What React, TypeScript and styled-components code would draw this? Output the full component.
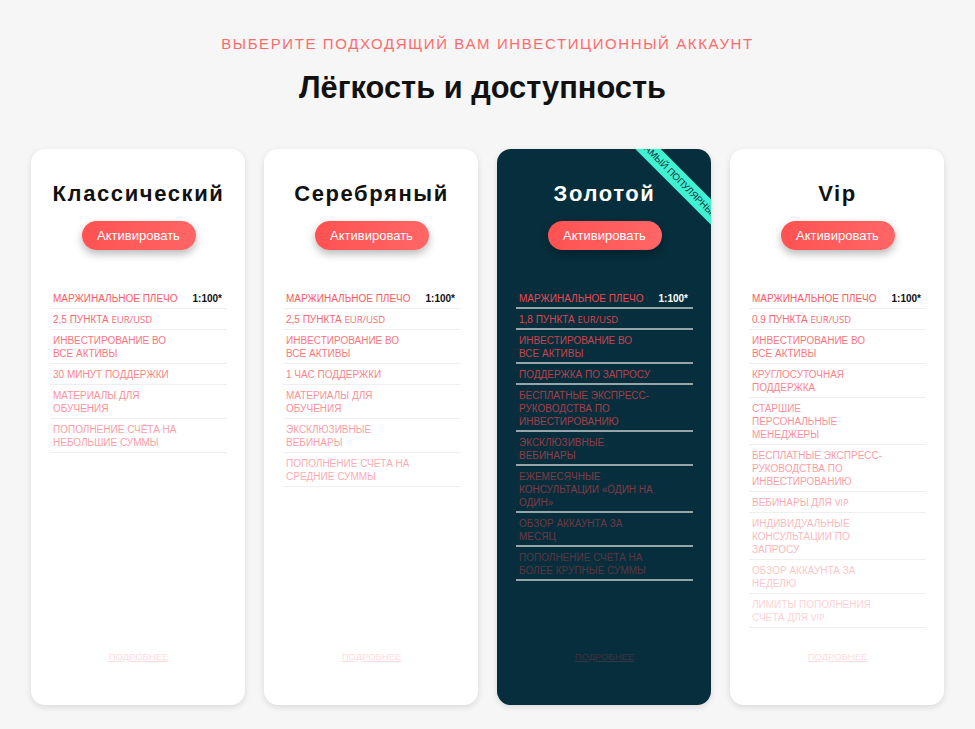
import React from "react";
import styled, { createGlobalStyle } from "styled-components";

const GlobalStyle = createGlobalStyle`
  * { box-sizing: border-box; }
  html, body { margin: 0; padding: 0; background: #f6f6f6; }
  body { font-family: "Liberation Sans", Arial, sans-serif; }
`;

const Page = styled.div`
  width: 975px;
  min-height: 729px;
  padding-top: 35px;
  display: flex;
  flex-direction: column;
  align-items: center;
`;

const Eyebrow = styled.div`
  font-size: 15px;
  letter-spacing: 1.6px;
  color: #ff6b6b;
  line-height: 18px;
  text-transform: uppercase;
`;

const Heading = styled.h1`
  margin: 17px 10px 0 0;
  font-size: 30.8px;
  line-height: 36px;
  font-weight: 700;
  color: #111;
`;

const Grid = styled.div`
  margin-top: 43px;
  display: grid;
  grid-template-columns: repeat(4, 214px);
  gap: 19px;
`;

const Card = styled.div<{ $dark?: boolean }>`
  position: relative;
  overflow: hidden;
  height: 556px;
  border-radius: 14px;
  background: ${(p) => (p.$dark ? "#062e3c" : "#ffffff")};
  box-shadow: 0 2px 6px rgba(0, 0, 0, 0.12);
  padding: 30px 18px 43px 19px;
  display: flex;
  flex-direction: column;
`;

const CardTitle = styled.h2<{ $dark?: boolean }>`
  margin: 0;
  text-align: center;
  font-size: 22px;
  line-height: 30px;
  letter-spacing: 1.6px;
  font-weight: 700;
  color: ${(p) => (p.$dark ? "#ffffff" : "#111111")};
`;

const ActivateButton = styled.button`
  align-self: center;
  margin-top: 12px;
  width: 114px;
  height: 29px;
  border: none;
  border-radius: 15px;
  background: linear-gradient(90deg, #ff5252, #ff6666);
  color: #fff;
  font-family: "Liberation Sans", Arial, sans-serif;
  font-size: 13px;
  box-shadow: 0 4px 8px rgba(0, 0, 0, 0.28);
  cursor: pointer;
`;

const List = styled.ul`
  list-style: none;
  margin: 38px 0 0;
  padding: 0;
`;

const Row = styled.li<{ $dark?: boolean }>`
  display: flex;
  justify-content: space-between;
  align-items: flex-start;
  padding: ${(p) => (p.$dark ? "4px 5px 2px 3px" : "4px 5px 3px 3px")};
  border-bottom: ${(p) =>
    p.$dark ? "2px solid rgba(200, 205, 208, 0.75)" : "1px solid #efefef"};
`;

const Label = styled.span`
  max-width: 150px;
  font-size: 10px;
  line-height: 13px;
  white-space: pre-line;
  text-transform: uppercase;
  color: #ff4b55;
`;

const Value = styled.span<{ $dark?: boolean }>`
  font-size: 10px;
  line-height: 13px;
  font-weight: 700;
  color: ${(p) => (p.$dark ? "#ffffff" : "#111111")};
`;

const Latin = styled.span`
  font-family: "Open Sans", "Liberation Sans", sans-serif;
  font-size: 9.5px;
`;

const More = styled.a`
  margin-top: auto;
  align-self: center;
  font-size: 9.5px;
  color: #ff4b55;
  opacity: 0.2;
  text-decoration: underline;
  text-transform: uppercase;
  cursor: pointer;
`;

const Ribbon = styled.div`
  position: absolute;
  left: 109px;
  top: 22px;
  width: 146px;
  height: 18px;
  transform: rotate(45deg);
  background: #40f2d2;
  color: #0a2c38;
  font-size: 9.5px;
  line-height: 18px;
  text-align: center;
  text-transform: uppercase;
  white-space: nowrap;
`;

type Item = { text: React.ReactNode; value?: string };
type Plan = { name: string; dark?: boolean; popular?: boolean; items: Item[] };

const eur = <Latin>EUR/USD</Latin>;

const plans: Plan[] = [
  {
    name: "Классический",
    items: [
      { text: "Маржинальное плечо", value: "1:100*" },
      { text: <>2,5 пункта {eur}</> },
      { text: "Инвестирование во\nвсе активы" },
      { text: "30 минут поддержки" },
      { text: "Материалы для\nобучения" },
      { text: "Пополнение счёта на\nнебольшие суммы" },
    ],
  },
  {
    name: "Серебряный",
    items: [
      { text: "Маржинальное плечо", value: "1:100*" },
      { text: <>2,5 пункта {eur}</> },
      { text: "Инвестирование во\nвсе активы" },
      { text: "1 час поддержки" },
      { text: "Материалы для\nобучения" },
      { text: "Эксклюзивные\nвебинары" },
      { text: "Пополнение счета на\nсредние суммы" },
    ],
  },
  {
    name: "Золотой",
    dark: true,
    popular: true,
    items: [
      { text: "Маржинальное плечо", value: "1:100*" },
      { text: <>1,8 пункта {eur}</> },
      { text: "Инвестирование во\nвсе активы" },
      { text: "Поддержка по запросу" },
      { text: "Бесплатные экспресс-\nруководства по\nинвестированию" },
      { text: "Эксклюзивные\nвебинары" },
      { text: "Ежемесячные\nконсультации «один на\nодин»" },
      { text: "Обзор аккаунта за\nмесяц" },
      { text: "Пополнение счета на\nболее крупные суммы" },
    ],
  },
  {
    name: "Vip",
    items: [
      { text: "Маржинальное плечо", value: "1:100*" },
      { text: <>0.9 пункта {eur}</> },
      { text: "Инвестирование во\nвсе активы" },
      { text: "Круглосуточная\nподдержка" },
      { text: "Старшие\nперсональные\nменеджеры" },
      { text: "Бесплатные экспресс-\nруководства по\nинвестированию" },
      { text: <>Вебинары для <Latin>VIP</Latin></> },
      { text: "Индивидуальные\nконсультации по\nзапросу" },
      { text: "Обзор аккаунта за\nнеделю" },
      { text: <>{"Лимиты пополнения\nсчета для "}<Latin>VIP</Latin></> },
    ],
  },
];

export default function App() {
  return (
    <>
      <GlobalStyle />
      <Page>
        <Eyebrow>Выберите подходящий вам инвестиционный аккаунт</Eyebrow>
        <Heading>Лёгкость и доступность</Heading>
        <Grid>
          {plans.map((plan) => (
            <Card key={plan.name} $dark={plan.dark}>
              {plan.popular && <Ribbon>Самый популярный</Ribbon>}
              <CardTitle $dark={plan.dark}>{plan.name}</CardTitle>
              <ActivateButton>Активировать</ActivateButton>
              <List>
                {plan.items.map((item, i) => (
                  <Row key={i} $dark={plan.dark}>
                    <Label style={{ opacity: Math.max(0.25, 0.92 - i * 0.075) }}>
                      {item.text}
                    </Label>
                    {item.value && <Value $dark={plan.dark}>{item.value}</Value>}
                  </Row>
                ))}
              </List>
              <More>Подробнее</More>
            </Card>
          ))}
        </Grid>
      </Page>
    </>
  );
}
